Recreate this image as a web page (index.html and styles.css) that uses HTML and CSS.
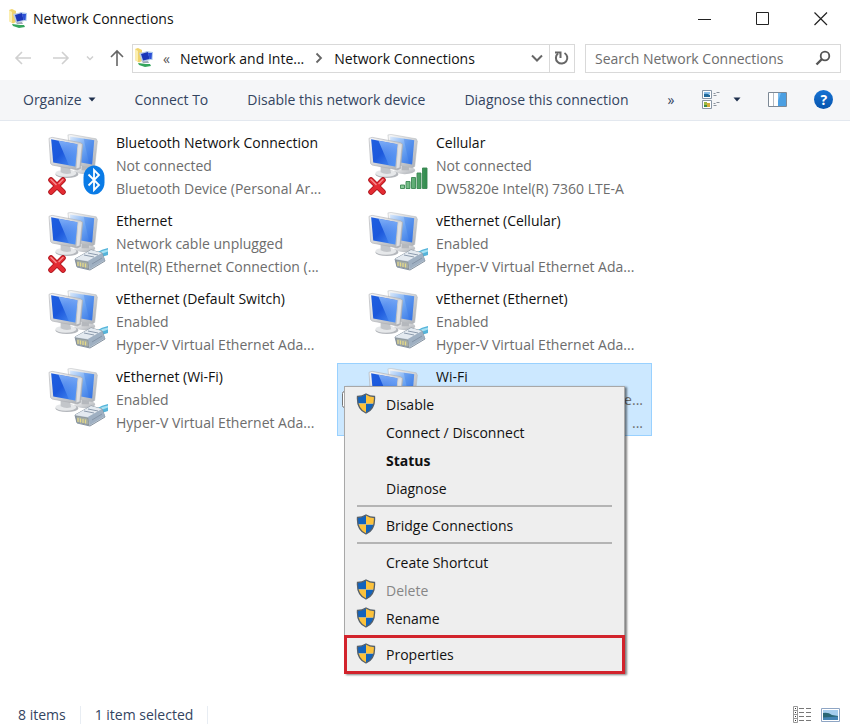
FILE: index.html
```html
<!DOCTYPE html>
<html lang="en">
<head>
    <meta charset="UTF-8">
    <meta name="viewport" content="width=device-width, initial-scale=1.0">
    <title>Network Connections</title>
    <link rel="stylesheet" href="styles.css">
</head>
<body>
    <!-- Shared icons -->
    <svg class="sprite" width="0" height="0" aria-hidden="true">
        <defs>
            <linearGradient id="screen-front" x1="0" y1="0" x2="1" y2="1">
                <stop offset="0" stop-color="#1f5fe0"/>
                <stop offset="0.45" stop-color="#1c58dc"/>
                <stop offset="1" stop-color="#4d92f5"/>
            </linearGradient>
            <linearGradient id="screen-back" x1="0" y1="0" x2="1" y2="1">
                <stop offset="0" stop-color="#dceafb"/>
                <stop offset="0.5" stop-color="#6ea6f2"/>
                <stop offset="1" stop-color="#2f6fe4"/>
            </linearGradient>
            <linearGradient id="screen-shine" x1="0" y1="0" x2="0" y2="1">
                <stop offset="0" stop-color="#9cc7ff" stop-opacity="0.75"/>
                <stop offset="1" stop-color="#5c9cf7" stop-opacity="0.3"/>
            </linearGradient>
            <linearGradient id="silver" x1="0" y1="0" x2="1" y2="1">
                <stop offset="0" stop-color="#fafafa"/>
                <stop offset="1" stop-color="#a9adb3"/>
            </linearGradient>
            <linearGradient id="signal" x1="0" y1="0" x2="1" y2="0">
                <stop offset="0" stop-color="#8fcf9d"/>
                <stop offset="1" stop-color="#2f8a4c"/>
            </linearGradient>

            <symbol id="monitors" viewBox="0 0 60 64">
                <g transform="translate(0 2.500) scale(1.050 0.970)">
                    <ellipse cx="35" cy="38" rx="10" ry="4" fill="url(#silver)"/>
                    <path d="M32 32h7v6h-7z" fill="#b5b8bd"/>
                    <path d="M19 1.500 22 1 46 5.500 47 8 44.500 34 42 35.500 22 31z" fill="url(#silver)" stroke="#b4b7bb" stroke-width="0.500"/>
                    <path d="M21 3 44 7 42 32 22 28z" fill="url(#screen-back)"/>
                    <path d="M34 5.300 44 7 42 31 39 30z" fill="#2f70e6" opacity="0.300"/>
                    <ellipse cx="18" cy="42" rx="11" ry="4" fill="#b4b7bc"/>
                    <ellipse cx="17" cy="41" rx="10" ry="3.500" fill="#e6e8ea"/>
                    <path d="M12 33 21 35 22 41Q17 43 12 40z" fill="#c3c6ca"/>
                    <path d="M1 5 4 4 31 9.500 33 11 31 36 28 37.500 4 32.500 2.500 31z" fill="url(#silver)" stroke="#aaadb2" stroke-width="0.600"/>
                    <path d="M3 6 28 11 26 34 5 30z" fill="url(#screen-front)"/>
                    <path d="M10 7.500 28 11 26 34 20 33z" fill="url(#screen-shine)"/>
                    <path d="M29 11 32 11 30 35 27 36z" fill="#dfe1e4"/>
                </g>
            </symbol>

            <symbol id="cross" viewBox="0 0 18 18">
                <path d="M3 3 15 15M15 3 3 15" stroke="#a80f18" stroke-width="5.500" stroke-linecap="round"/>
                <path d="M3 3 15 15M15 3 3 15" stroke="#e32b32" stroke-width="4" stroke-linecap="round"/>
                <path d="M3 2.500 8 7.500M15 2.500 11 6.500" stroke="#f68a8c" stroke-width="1.500" stroke-linecap="round"/>
            </symbol>

            <symbol id="bluetooth" viewBox="0 0 22 30">
                <rect x="0.500" y="0.500" width="21" height="29" rx="10.500" ry="12" fill="#0a7be6"/>
                <path d="M5.500 9.500 16 20 11 25V5L16 10 5.500 20.500" fill="none" stroke="#fff" stroke-width="1.800"/>
            </symbol>

            <symbol id="bars" viewBox="0 0 28 22">
                <path d="M0.500 18h4v3.500h-4zM6 14.500h4v7h-4zM11.500 10.500h4v11h-4zM17 6h4v15.500h-4zM22.500 1h4.500v20.500h-4.500z" fill="url(#signal)" stroke="#3a8752" stroke-width="0.900"/>
            </symbol>

            <symbol id="cable" viewBox="0 0 34 24">
                <path d="M22 6Q28 2 34 1V8Q29 9 25 12z" fill="#55b4da"/>
                <path d="M24 6Q29 3 34 2.500V4.500Q29 6 25 8z" fill="#a5e0f2"/>
                <path d="M1 12 17 3 28 6 31 14 16 23 3 20z" fill="#c9d3dd" stroke="#7f8c9a" stroke-width="0.900"/>
                <path d="M1 12 17 3 28 6 14 14z" fill="#e4eaf0"/>
                <path d="M14 14 28 6 31 13 16 22z" fill="#9fb0c2"/>
                <path d="M2 13 14 15 15 22 3 19z" fill="#a5ada6" stroke="#76808a" stroke-width="0.600"/>
                <path d="M4 15v4M6.500 15.500v4M9 16v4M11.500 16.500v4" stroke="#e5d989" stroke-width="1.200"/>
                <path d="M10 8 20 10M14 6 24 8M18 17 28 11" stroke="#8292a5" stroke-width="0.900"/>
            </symbol>

            <symbol id="shield" viewBox="0 0 20 21">
                <clipPath id="shield-clip">
                    <path d="M10 1C13 3 16 3.500 18.500 3.500 19 11 17 17 10 20 3 17 1 11 1.500 3.500 4 3.500 7 3 10 1z"/>
                </clipPath>
                <g clip-path="url(#shield-clip)">
                    <path d="M0 0h10v10.500H0zM10 10.500h10V21H10z" fill="#1263bd"/>
                    <path d="M10 0h10v10.500H10zM0 10.500h10V21H0z" fill="#fcc23c"/>
                </g>
                <path d="M10 1C13 3 16 3.500 18.500 3.500 19 11 17 17 10 20 3 17 1 11 1.500 3.500 4 3.500 7 3 10 1z" fill="none" stroke="#55606b" stroke-width="1.300"/>
            </symbol>

            <symbol id="folder-net" viewBox="0 0 20 20">
                <path d="M1 1 4 0 8 2V13L5 14.500 1 12z" fill="#efd36c"/>
                <path d="M1 1 4 3V14L1 12z" fill="#fbeeb0"/>
                <path d="M12 3 19 4 18.500 12 11 11z" fill="#a9c5ec"/>
                <path d="M5 5 14 3 16.500 12 8 14z" fill="#b9cbe6"/>
                <path d="M7 6 14 4 15.500 11 9 12.500z" fill="#1a35b8"/>
                <path d="M14 5 18 5 17.500 11 15.500 11z" fill="#2c50d6"/>
                <path d="M8 13.500 14 13 15 15 9 15z" fill="#9fa9b7"/>
                <path d="M4 15 12 16H16L17 18 11 19 5 17z" fill="#35a65c"/>
            </symbol>
        </defs>
    </svg>

    <header class="title-bar">
        <svg class="app-icon" aria-hidden="true"><use href="#folder-net"/></svg>
        <h1>Network Connections</h1>
        <div class="window-buttons">
            <button type="button" aria-label="Minimize">
                <svg width="14" height="14" viewBox="0 0 14 14"><path d="M0 7.500h13" stroke="#222"/></svg>
            </button>
            <button type="button" aria-label="Maximize">
                <svg width="14" height="14" viewBox="0 0 14 14"><path d="M0.500 0.500h12v12h-12z" fill="none" stroke="#222"/></svg>
            </button>
            <button type="button" aria-label="Close">
                <svg width="14" height="14" viewBox="0 0 14 14"><path d="M0.500 0.500 13 13M13 0.500 0.500 13" stroke="#222" stroke-width="1.200"/></svg>
            </button>
        </div>
    </header>

    <nav class="nav-bar" aria-label="Navigation">
        <div class="nav-buttons">
            <button type="button" aria-label="Back" disabled>
                <svg width="18" height="16" viewBox="0 0 18 16"><path d="M17 8H2M8 2 2 8 8 14" fill="none" stroke="#d0d0d0" stroke-width="1.600"/></svg>
            </button>
            <button type="button" aria-label="Forward" disabled>
                <svg width="18" height="16" viewBox="0 0 18 16"><path d="M1 8H16M10 2 16 8 10 14" fill="none" stroke="#d0d0d0" stroke-width="1.600"/></svg>
            </button>
            <button type="button" aria-label="Recent locations" disabled>
                <svg width="8" height="16" viewBox="0 0 8 16"><path d="M1 6.500 4 9.500 7 6.500" fill="none" stroke="#cfcfcf" stroke-width="1.500"/></svg>
            </button>
            <button type="button" aria-label="Up">
                <svg width="14" height="18" viewBox="0 0 14 18"><path d="M7 17V2M1 8 7 2 13 8" fill="none" stroke="#666" stroke-width="1.600"/></svg>
            </button>
        </div>
        <div class="address-bar">
            <svg class="app-icon" aria-hidden="true"><use href="#folder-net"/></svg>
            <span class="more">«</span>
            <a href="#">Network and Inte...</a>
            <svg class="crumb-arrow" width="8" height="12" viewBox="0 0 8 12"><path d="M1.500 1.500 6 6 1.500 10.500" fill="none" stroke="#666" stroke-width="1.800"/></svg>
            <a href="#">Network Connections</a>
            <button type="button" class="history" aria-label="Previous locations">
                <svg width="12" height="12" viewBox="0 0 12 12"><path d="M1 3.500 6 8.500 11 3.500" fill="none" stroke="#666" stroke-width="2"/></svg>
            </button>
            <button type="button" class="refresh" aria-label="Refresh">
                <svg width="16" height="16" viewBox="0 0 16 16"><path d="M10.500 3A5.700 5.700 0 1 1 4 3.500" fill="none" stroke="#666" stroke-width="2"/><path d="M1 2.500H6.500V8" fill="none" stroke="#666" stroke-width="2"/></svg>
            </button>
        </div>
        <form class="search">
            <input type="search" aria-label="Search Network Connections" placeholder="Search Network Connections">
            <button type="submit" aria-label="Search">
                <svg width="16" height="16" viewBox="0 0 16 16"><circle cx="10" cy="6" r="4.300" fill="none" stroke="#555" stroke-width="1.800"/><path d="M7 9 1.500 14.500" stroke="#555" stroke-width="2.400"/></svg>
            </button>
        </form>
    </nav>

    <div class="toolbar">
        <button type="button">Organize
            <svg width="8" height="5" viewBox="0 0 8 5"><path d="M0.500 0.500h7L4 4.500z" fill="#1e2f4d"/></svg>
        </button>
        <button type="button">Connect To</button>
        <button type="button">Disable this network device</button>
        <button type="button">Diagnose this connection</button>
        <div class="toolbar-right">
            <button type="button" class="overflow" aria-label="More commands">»</button>
            <button type="button" class="view" aria-label="Change your view">
                <svg width="20" height="20" viewBox="0 0 20 20">
                    <path d="M1.500 0.500h9v8h-9zM1.500 10.500h9v8h-9z" fill="#fff" stroke="#8795a5"/>
                    <path d="M3 2h6v2H3z" fill="#8cc1ed"/>
                    <path d="M3 4Q6 3 9 5V7H3z" fill="#236a9a"/>
                    <path d="M3 12h3v3H3z" fill="#9bb943"/>
                    <path d="M6 13h3v4H5z" fill="#d6ad3a"/>
                    <path d="M3 15h3v2H3z" fill="#3d8b46"/>
                    <path d="M12.500 3.500h2M15.500 2.500h3M12.500 5.500h3M12.500 13.500h2M15.500 12.500h3M12.500 15.500h3" stroke="#8a929c"/>
                </svg>
                <svg width="8" height="5" viewBox="0 0 8 5"><path d="M0.500 0.500h7L4 4.500z" fill="#1e2f4d"/></svg>
            </button>
            <button type="button" aria-label="Show the preview pane">
                <svg width="19" height="15" viewBox="0 0 19 15"><path d="M0.500 0.500h18v14H0.500z" fill="#fff" stroke="#7d8996"/><path d="M5.500 1v13" stroke="#b5bcc4"/><path d="M10 1h8v13h-8z" fill="#4b9fe2"/><path d="M10 1h3L10 9z" fill="#79bbee"/></svg>
            </button>
            <button type="button" aria-label="Get help" class="help"><span>?</span></button>
        </div>
    </div>

    <main class="connections">
        <article class="connection">
            <div class="icon">
                <svg class="pc"><use href="#monitors"/></svg>
                <svg class="badge-off"><use href="#cross"/></svg>
                <svg class="badge-bluetooth"><use href="#bluetooth"/></svg>
            </div>
            <div class="info">
                <h2>Bluetooth Network Connection</h2>
                <p>Not connected</p>
                <p>Bluetooth Device (Personal Ar...</p>
            </div>
        </article>
        <article class="connection">
            <div class="icon">
                <svg class="pc"><use href="#monitors"/></svg>
                <svg class="badge-off"><use href="#cross"/></svg>
                <svg class="badge-signal"><use href="#bars"/></svg>
            </div>
            <div class="info">
                <h2>Cellular</h2>
                <p>Not connected</p>
                <p>DW5820e Intel(R) 7360 LTE-A</p>
            </div>
        </article>
        <article class="connection">
            <div class="icon">
                <svg class="pc"><use href="#monitors"/></svg>
                <svg class="badge-off"><use href="#cross"/></svg>
                <svg class="badge-cable"><use href="#cable"/></svg>
            </div>
            <div class="info">
                <h2>Ethernet</h2>
                <p>Network cable unplugged</p>
                <p>Intel(R) Ethernet Connection (...</p>
            </div>
        </article>
        <article class="connection">
            <div class="icon">
                <svg class="pc"><use href="#monitors"/></svg>
                <svg class="badge-cable"><use href="#cable"/></svg>
            </div>
            <div class="info">
                <h2>vEthernet (Cellular)</h2>
                <p>Enabled</p>
                <p>Hyper-V Virtual Ethernet Ada...</p>
            </div>
        </article>
        <article class="connection">
            <div class="icon">
                <svg class="pc"><use href="#monitors"/></svg>
                <svg class="badge-cable"><use href="#cable"/></svg>
            </div>
            <div class="info">
                <h2>vEthernet (Default Switch)</h2>
                <p>Enabled</p>
                <p>Hyper-V Virtual Ethernet Ada...</p>
            </div>
        </article>
        <article class="connection">
            <div class="icon">
                <svg class="pc"><use href="#monitors"/></svg>
                <svg class="badge-cable"><use href="#cable"/></svg>
            </div>
            <div class="info">
                <h2>vEthernet (Ethernet)</h2>
                <p>Enabled</p>
                <p>Hyper-V Virtual Ethernet Ada...</p>
            </div>
        </article>
        <article class="connection">
            <div class="icon">
                <svg class="pc"><use href="#monitors"/></svg>
                <svg class="badge-cable"><use href="#cable"/></svg>
            </div>
            <div class="info">
                <h2>vEthernet (Wi-Fi)</h2>
                <p>Enabled</p>
                <p>Hyper-V Virtual Ethernet Ada...</p>
            </div>
        </article>
        <article class="connection selected">
            <input type="checkbox" class="item-check" aria-label="Select Wi-Fi">
            <div class="icon">
                <svg class="pc"><use href="#monitors"/></svg>
            </div>
            <div class="info">
                <h2>Wi-Fi</h2>
                <p>e...</p>
                <p>...</p>
            </div>

            <!-- Right-click menu -->
            <div class="context-menu" role="menu">
                <button type="button" role="menuitem"><svg><use href="#shield"/></svg>Disable</button>
                <button type="button" role="menuitem">Connect / Disconnect</button>
                <button type="button" role="menuitem" class="default">Status</button>
                <button type="button" role="menuitem">Diagnose</button>
                <hr>
                <button type="button" role="menuitem"><svg><use href="#shield"/></svg>Bridge Connections</button>
                <hr>
                <button type="button" role="menuitem">Create Shortcut</button>
                <button type="button" role="menuitem" disabled><svg><use href="#shield"/></svg>Delete</button>
                <button type="button" role="menuitem"><svg><use href="#shield"/></svg>Rename</button>
                <button type="button" role="menuitem" class="highlight"><svg><use href="#shield"/></svg>Properties</button>
            </div>
        </article>
    </main>

    <footer class="status-bar">
        <span>8 items</span>
        <span>1 item selected</span>
        <div class="view-buttons">
            <button type="button" aria-label="Details view">
                <svg width="19" height="17" viewBox="0 0 19 17"><path d="M0.500 0.500h4v16h-4zM0.500 4.500h4M0.500 8.500h4M0.500 12.500h4" fill="#fff" stroke="#999"/><path d="M2 2.500h1M2 6.500h1M2 10.500h1M2 14.500h1" stroke="#333"/><path d="M6 2.500h5M13 2.500h5M6 6.500h5M13 6.500h5M6 10.500h5M13 10.500h5M6 14.500h5M13 14.500h5" stroke="#777"/></svg>
            </button>
            <button type="button" aria-label="Large icons view">
                <svg width="19" height="14" viewBox="0 0 19 14"><path d="M0.500 0.500h18v13H0.500z" fill="#fff" stroke="#8ea5c4"/><path d="M2 2h15v10H2z" fill="#a4cdee"/><path d="M2 5Q7 4 11 7L17 8V10H2z" fill="#286675"/><path d="M2 9.500 17 8.500V12H2z" fill="#4384b5"/></svg>
            </button>
        </div>
    </footer>
</body>
</html>
```

FILE: styles.css
```css
* {
    box-sizing: border-box;
}

body {
    font-family: "Open Sans", "Noto Sans", sans-serif;
    font-size: 14px;
    color: #111;
    background-color: white;
    min-height: 100vh;
    margin: 0;
    display: flex;
    flex-direction: column;
}

h1, h2, p {
    font-size: 14px;
    font-weight: normal;
    margin: 0;
}

button {
    font: inherit;
    color: inherit;
    background: none;
    border: none;
    padding: 0;
    display: flex;
    align-items: center;
    justify-content: center;
}

a {
    color: inherit;
    text-decoration: none;
}

svg {
    flex-shrink: 0;
}

.sprite {
    position: absolute;
}

.app-icon {
    width: 20px;
    height: 20px;
}

/* Title bar */
.title-bar {
    display: flex;
    align-items: center;
    height: 37px;
    padding-left: 8px;
    gap: 5px;
}

.window-buttons {
    display: flex;
    margin-left: auto;
}

.window-buttons button {
    width: 58px;
    height: 36px;
}

/* Navigation */
.nav-bar {
    display: flex;
    align-items: center;
    height: 43px;
    padding: 0 9px 1px 14px;
}

.nav-buttons {
    display: flex;
    align-items: center;
    gap: 16px;
    margin-right: 8px;
}

.nav-buttons button:nth-child(2) {
    margin-left: 4px;
}

.address-bar {
    display: flex;
    align-items: center;
    flex: 1;
    height: 29px;
    border: 1px solid #d9d9d9;
    padding-left: 1px;
    white-space: nowrap;
}

.more {
    color: #555;
    margin: 0 10px 0 9px;
}

.crumb-arrow {
    margin: 0 11px;
}

.history {
    margin-left: auto;
    width: 24px;
    height: 100%;
}

.refresh {
    width: 25px;
    height: 100%;
    border-left: 1px solid #d9d9d9;
}

.search {
    display: flex;
    align-items: center;
    flex: 0 1 256px;
    height: 29px;
    margin-left: 10px;
    padding: 0 9px;
    border: 1px solid #d9d9d9;
}

.search input {
    font: inherit;
    flex: 1;
    min-width: 0;
    padding: 0;
    border: none;
    outline: none;
    background: none;
}

.search input::placeholder {
    color: #6d6d6d;
}

/* Toolbar */
.toolbar {
    display: flex;
    align-items: center;
    gap: 39px;
    height: 41px;
    padding: 0 20px 1px 23px;
    background-color: #f5f6f8;
    border-bottom: 1px solid #e3e8ef;
    color: #33445f;
    white-space: nowrap;
}

.toolbar button {
    gap: 6px;
}

.toolbar-right {
    display: flex;
    align-items: center;
    gap: 27px;
    margin-left: auto;
}

.toolbar .view {
    gap: 12px;
}

.toolbar .help {
    width: 19px;
    height: 19px;
    border-radius: 50%;
    background: linear-gradient(#1672d3, #0755ae);
    color: white;
    font-weight: bold;
}

/* Connections */
.connections {
    display: grid;
    grid-template-columns: repeat(auto-fill, 315px);
    align-content: start;
    gap: 5px;
    flex: 1;
    padding: 8px 17px;
}

.connection {
    position: relative;
    display: flex;
    gap: 8px;
    height: 73px;
    padding: 2px 9px 0 31px;
}

.selected {
    background-color: #cce8ff;
    outline: 1px solid #99d1ff;
    outline-offset: -1px;
}

.icon {
    position: relative;
    width: 60px;
    height: 64px;
    flex-shrink: 0;
}

.pc {
    width: 60px;
    height: 64px;
}

.badge-off,
.badge-bluetooth,
.badge-signal,
.badge-cable {
    position: absolute;
}

.badge-off {
    left: 0;
    bottom: 0;
    width: 18px;
    height: 18px;
}

.badge-bluetooth {
    right: 3px;
    bottom: 0;
    width: 22px;
    height: 30px;
}

.badge-signal {
    right: 0;
    bottom: 6px;
    width: 28px;
    height: 22px;
}

.badge-cable {
    right: 0;
    bottom: 2px;
    width: 34px;
    height: 24px;
}

.info {
    flex: 1;
    min-width: 0;
    line-height: 23px;
    white-space: nowrap;
}

.info p {
    color: #6d6d6d;
}

.selected .info p {
    text-align: right;
}

.item-check {
    position: absolute;
    left: 5px;
    top: 28px;
    width: 17px;
    height: 17px;
    margin: 0;
}

/* Context menu */
.context-menu {
    position: absolute;
    left: 7px;
    top: 23px;
    width: 281px;
    padding-top: 3px;
    background-color: #eee;
    border: 1px solid #a8a8a8;
    border-bottom: none;
    box-shadow: 2px 1px 2px rgba(0, 0, 0, 0.5);
}

.context-menu button {
    width: 100%;
    height: 28px;
    padding-left: 41px;
    justify-content: flex-start;
}

.context-menu svg {
    width: 20px;
    height: 21px;
    margin: 0 10px 2px -30px;
}

.context-menu hr {
    height: 2px;
    margin: 3px 12px 4px;
    border: none;
    background-color: #b4b4b4;
}

.context-menu .default {
    font-weight: bold;
}

.context-menu button:disabled {
    color: #868686;
}

.context-menu .highlight {
    width: auto;
    min-width: calc(100% + 2px);
    height: 39px;
    margin: 3px -1px 0;
    padding-left: 39px;
    border: 3px solid #d2232c;
}

/* Status bar */
.status-bar {
    display: flex;
    align-items: center;
    height: 19px;
    padding: 0 10px 0 18px;
    color: #33445f;
}

.status-bar span {
    padding-right: 14px;
    margin-right: 14px;
    border-right: 1px solid #e8edf3;
    line-height: 18px;
}

.view-buttons {
    display: flex;
    gap: 9px;
    margin-left: auto;
}
```
